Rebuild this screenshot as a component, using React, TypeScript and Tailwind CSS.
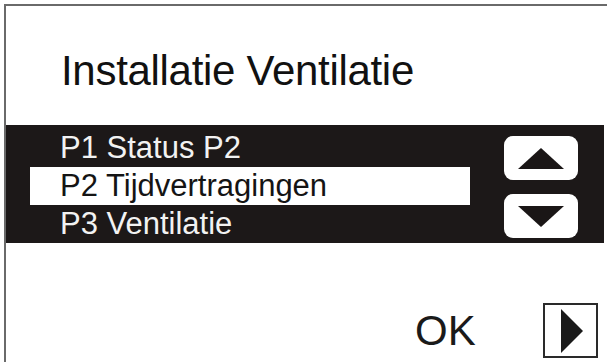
const rows = [
  { label: 'P1 Status P2', selected: false },
  { label: 'P2 Tijdvertragingen', selected: true },
  { label: 'P3 Ventilatie', selected: false },
];

function Triangle({ dir }: { dir: 'up' | 'down' | 'right' }) {
  if (dir === 'right') {
    return (
      <svg width="22" height="44" viewBox="0 0 22 44">
        <polygon points="0,0 22,22 0,44" fill="#1a1a1a" />
      </svg>
    );
  }
  return (
    <svg width="46" height="21" viewBox="0 0 46 21">
      <polygon points={dir === 'up' ? '23,0 46,21 0,21' : '0,0 46,0 23,21'} fill="#1a1616" />
    </svg>
  );
}

export default function App() {
  return (
    <div
      className="w-[607px] h-[362px] overflow-hidden bg-white pt-[4px] pl-[4px]"
      style={{ fontFamily: '"Liberation Sans", Arial, sans-serif' }}
    >
      <div className="h-[400px] border-t-2 border-l-2 border-[#6a6a6a]">
        {/* title */}
        <div className="h-[119px] pt-[44px] pl-[55px]">
          <h1 className="text-[42px] leading-[42px] text-[#111] tracking-[-0.3px]">Installatie Ventilatie</h1>
        </div>

        {/* menu band */}
        <div className="h-[118px] mr-[3px] bg-[#1c1818] flex">
          <div className="w-[464px] pt-[4px]">
            {rows.map(r => (
              <div
                key={r.label}
                className={`ml-[24px] h-[38px] pl-[30px] text-[31px] leading-[38px] ${
                  r.selected ? 'bg-white text-[#141414]' : 'text-[#f2f2f2]'
                }`}
              >
                {r.label}
              </div>
            ))}
          </div>
          <div className="ml-[34px] pt-[11px] flex flex-col gap-[14px]">
            <button className="w-[74px] h-[44px] rounded-[9px] bg-white flex items-center justify-center">
              <Triangle dir="up" />
            </button>
            <button className="w-[74px] h-[44px] rounded-[9px] bg-white flex items-center justify-center">
              <Triangle dir="down" />
            </button>
          </div>
        </div>

        {/* footer */}
        <div className="pt-[60px] flex items-center pr-[9px]">
          <span className="ml-[409px] text-[42px] leading-[42px] text-[#1a1a1a]">OK</span>
          <button className="ml-auto w-[55px] h-[55px] border-2 border-[#2a2a2a] flex items-center justify-center pl-[3px]">
            <Triangle dir="right" />
          </button>
        </div>
      </div>
    </div>
  );
}
